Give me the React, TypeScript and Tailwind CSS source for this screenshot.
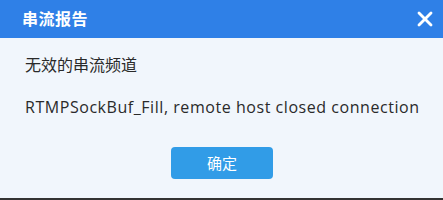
import { X } from 'lucide-react';

export default function App() {
  return (
    <div
      className="w-[443px] h-[200px] flex flex-col bg-[#f1f6fc] overflow-hidden"
      style={{ fontFamily: '"Open Sans", "Noto Sans CJK SC", sans-serif' }}
    >
      <div className="h-[38px] shrink-0 bg-[#2f80e7] flex items-center justify-between pl-[22px] pr-[6px]">
        <span className="text-white text-[16px] font-bold tracking-[0.5px]">串流报告</span>
        <X className="w-[24px] h-[24px] text-white" strokeWidth={2.8} />
      </div>
      <div className="flex-1 flex flex-col pl-[25px] pt-[15px] text-[#2a2a2a] text-[16px]">
        <p className="leading-[24px]">无效的串流频道</p>
        <p className="leading-[24px] mt-[18px] tracking-[0.55px]">
          RTMPSockBuf_Fill, remote host closed connection
        </p>
      </div>
      <div className="flex justify-center pb-[19px] pl-[1px]">
        <button className="w-[102px] h-[32px] rounded-[4px] bg-[#319ce7] text-white text-[15px]">
          确定
        </button>
      </div>
      <div className="h-[2px] shrink-0 bg-[#333]" />
    </div>
  );
}
